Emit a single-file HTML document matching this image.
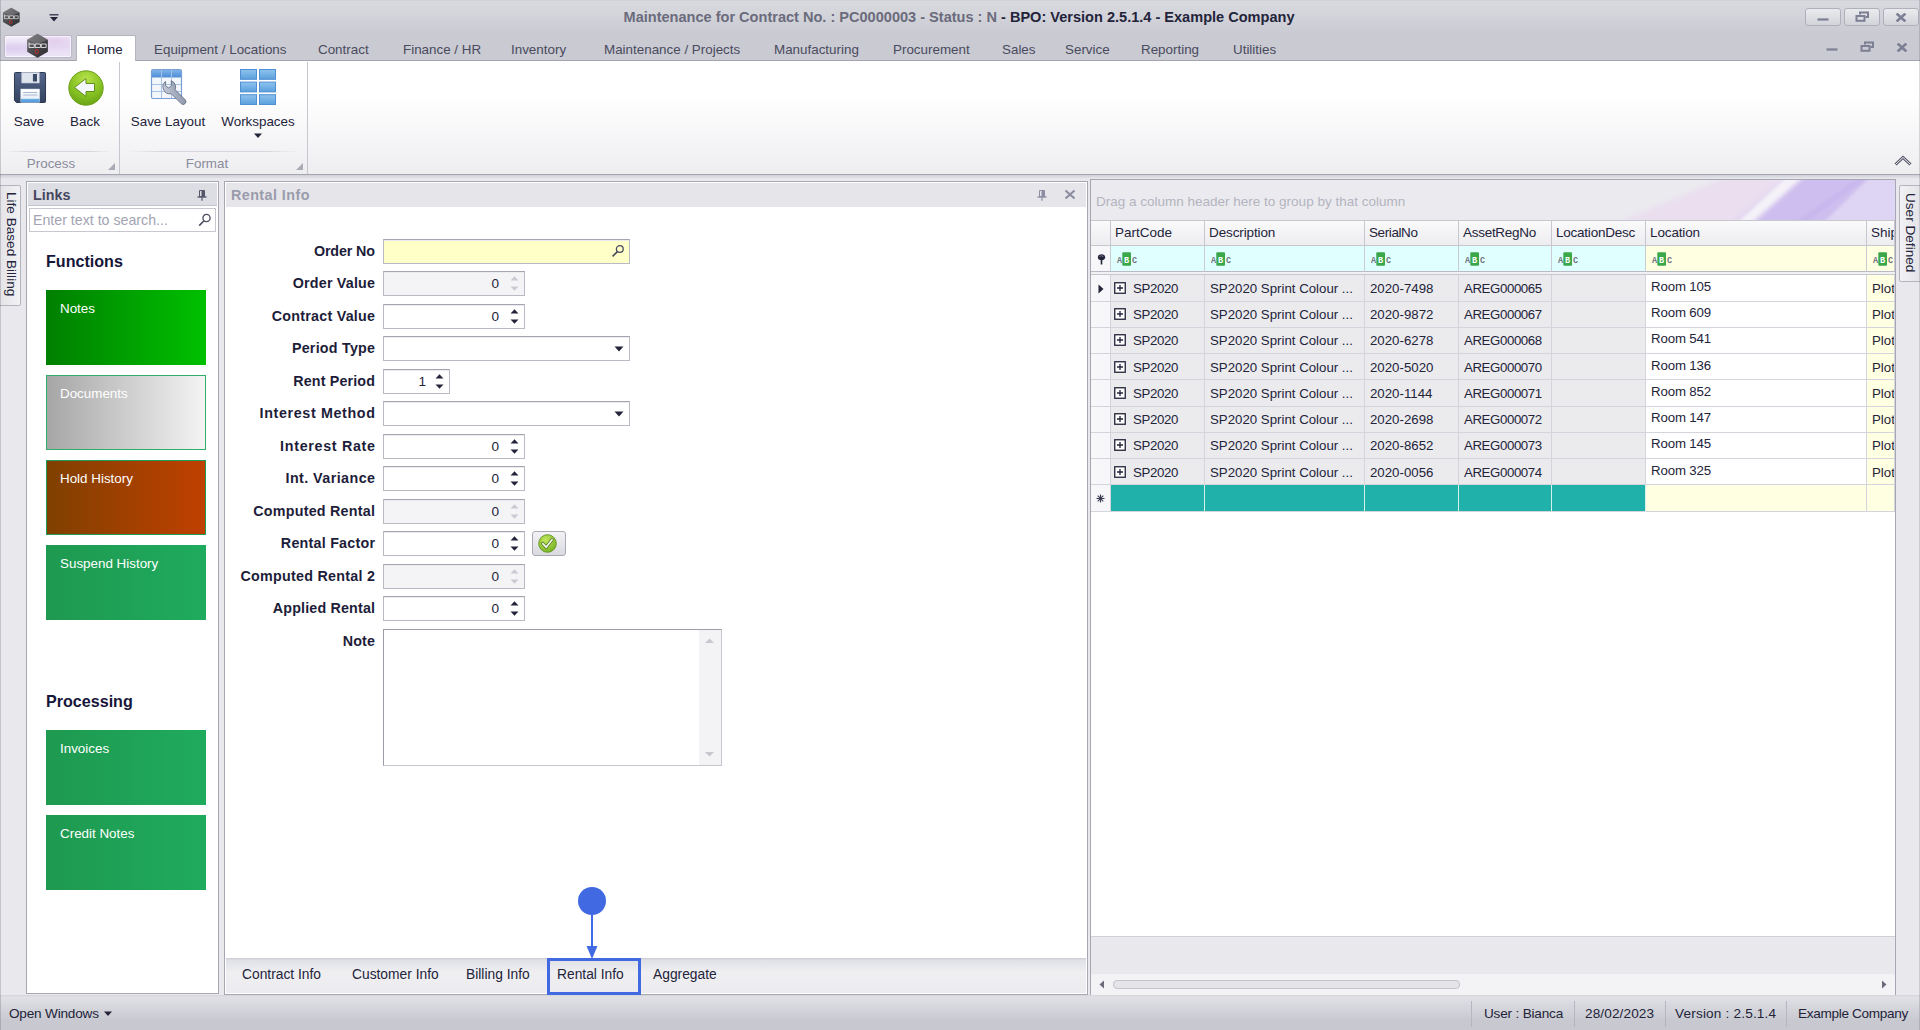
<!DOCTYPE html>
<html lang="en">
<head>
<meta charset="utf-8">
<title>Maintenance for Contract No. : PC0000003</title>
<style>
*{box-sizing:border-box;margin:0;padding:0}
html,body{width:1920px;height:1030px;overflow:hidden}
body{position:relative;background:#e9e9ed;font-family:"Liberation Sans","DejaVu Sans",sans-serif;font-size:13px;color:#23233a}
.abs{position:absolute}
/* title bar */
#titlebar{left:0;top:0;width:1920px;height:35px;background:linear-gradient(#c9cad0 0,#d8d9de 1px,#d4d5db 40%,#c9cad2 95%)}
#title{left:0;top:9px;width:1918px;text-align:center;font-weight:bold;font-size:14.55px;color:#6a6b7c;white-space:nowrap}
#title b{color:#23233a}
#tabstrip{left:0;top:35px;width:1920px;height:26px;background:#c9cad2;border-bottom:1px solid #a3a4ae}
.mtab{top:41.5px;font-size:13.4px;color:#4a4b5e;white-space:nowrap}
#hometab{left:76px;top:35px;width:60px;height:27px;background:#fff;border:1px solid #b4b5bf;border-bottom:none;border-radius:2px 2px 0 0}
#appbtn{left:4px;top:35px;width:68px;height:23px;border:1px solid #bdb8cc;border-radius:2px;box-shadow:inset 0 0 0 1px rgba(255,255,255,.6);background:radial-gradient(ellipse at 75% 25%,#e3cdee 0,rgba(227,205,238,0) 45%),radial-gradient(ellipse at 15% 60%,#dccdf0 0,rgba(220,205,240,0) 40%),linear-gradient(#f4eef9,#e6dcf3 50%,#ece4f6)}
/* ribbon */
#ribbon{left:0;top:61px;width:1920px;height:114px;background:linear-gradient(#ffffff 30%,#eeeef1);border-bottom:1px solid #a5a6b0}
.rsep{top:62px;width:1px;height:112px;background:#c6c7cf}
.rbtn{top:114px;font-size:13.4px;color:#23233a;text-align:center;white-space:nowrap}
.rgrp{top:156px;font-size:13.4px;color:#8a8b9c;text-align:center}
/* status bar */
#status{left:0;top:995px;width:1920px;height:35px;background:linear-gradient(#d4d5db 0,#e0e0e5 2px,#d2d3d9 45%,#c8c9d0 75%,#c8c9d0)}
.st{top:1006px;font-size:13.6px;color:#23233a;white-space:nowrap}
.ssep{top:1001px;width:1px;height:26px;background:#b5b6c0}
/* panels */
.panel{background:#fff;border:1px solid #a6a7b2}

/* side tabs */
.vtab{background:linear-gradient(90deg,#e4e4e8,#f2f2f5);border:1px solid #b3b4be;font-size:13.6px;color:#23233a;white-space:nowrap}
.vtext{transform-origin:0 0;transform:rotate(90deg);white-space:nowrap;font-size:13.6px;color:#23233a}
/* links */
#links{left:26px;top:181px;width:193px;height:813px}
#linkshdr{left:28px;top:183px;width:189px;height:23px;background:#dddee3;border-bottom:1px solid #c2c3cb}
.ptitle{font-weight:bold;font-size:14.3px;white-space:nowrap}
#lsearch{left:29px;top:208px;width:187px;height:24px;background:#fff;border:1px solid #c6c7cf}
.hd{font-weight:bold;font-size:16.1px;color:#16163a;white-space:nowrap}
.tile{left:46px;width:160px;height:75px;color:#fff;font-size:13.4px;padding:11px 0 0 14px;white-space:nowrap}
.tg{background:linear-gradient(90deg,#1e9950,#1fab5e)}

/* rental */
#rental{left:224px;top:181px;width:864px;height:814px}
#rentalhdr{left:226px;top:183px;width:860px;height:24px;background:#e6e6ea}
.lbl{left:226px;width:149px;text-align:right;font-weight:bold;font-size:14.3px;color:#1d1d3a;white-space:nowrap;letter-spacing:0}
.inp{left:383px;height:25px;background:#fff;border:1px solid #b9bac4;border-top-color:#a4a5b0;box-shadow:inset 0 1px 0 #ececf0}
.inp.dis{background:#f4f4f7}
.num{font-size:13.6px;color:#23233a;text-align:right}
#btabs{left:226px;top:958px;width:860px;height:35px;background:linear-gradient(#c9cad2 0,#dfe0e5 2px,#efeff2 40%,#ececf0)}
.bt{top:967px;font-size:13.8px;color:#23233a;white-space:nowrap}

/* grid */
#grid{left:1090px;top:179px;width:806px;height:817px;background:#fff}
#gpanel{left:1091px;top:180px;width:804px;height:41px;background:#ebebef;overflow:hidden;border-bottom:1px solid #c6c7cf}
.gh{top:221px;height:25px;background:linear-gradient(#fafafb,#ededf0);border-right:1px solid #c6c7cf;border-bottom:1px solid #c6c7cf;font-size:13.5px;padding:4px 0 0 4px;white-space:nowrap;overflow:hidden;color:#23233a}
.gf{top:246px;height:26px;background:#e0ffff;border-right:1px solid #c9cad2;border-bottom:1px solid #b9bac4}
.gc{height:26.25px;border-right:1px solid #d3d4dc;border-bottom:1px solid #d3d4dc;font-size:13.25px;padding:5.5px 0 0 5px;white-space:nowrap;overflow:hidden;color:#23233a;background:#ebebee}
.gc.w{background:#fff;padding-top:3.5px}
.gc.y{background:#ffffe1}
.gc.t{background:#20b2aa}
.gc.i{background:#f7f7f9}
</style>
</head>
<body>
<div id="titlebar" class="abs"></div>
<div id="title" class="abs">Maintenance for Contract No. : PC0000003 - Status : N <b>- BPO: Version 2.5.1.4 - Example Company</b></div>
<div id="tabstrip" class="abs"></div>
<div id="appbtn" class="abs"></div>
<div id="hometab" class="abs"></div>
<div class="abs mtab" style="left:87px;color:#23233a">Home</div>
<div class="abs mtab" style="left:154px">Equipment / Locations</div>
<div class="abs mtab" style="left:318px">Contract</div>
<div class="abs mtab" style="left:403px">Finance / HR</div>
<div class="abs mtab" style="left:511px">Inventory</div>
<div class="abs mtab" style="left:604px">Maintenance / Projects</div>
<div class="abs mtab" style="left:774px">Manufacturing</div>
<div class="abs mtab" style="left:893px">Procurement</div>
<div class="abs mtab" style="left:1002px">Sales</div>
<div class="abs mtab" style="left:1065px">Service</div>
<div class="abs mtab" style="left:1141px">Reporting</div>
<div class="abs mtab" style="left:1233px">Utilities</div>
<div id="ribbon" class="abs"></div>
<div class="abs" style="left:0;top:175px;width:1920px;height:4px;background:linear-gradient(#cfd0d7,#e9e9ed)"></div>
<div class="abs rsep" style="left:119px"></div>
<div class="abs rsep" style="left:307px"></div>
<div class="abs rbtn" style="left:4px;width:50px">Save</div>
<div class="abs rbtn" style="left:60px;width:50px">Back</div>
<div class="abs rbtn" style="left:123px;width:90px">Save Layout</div>
<div class="abs rbtn" style="left:213px;width:90px">Workspaces</div>
<div class="abs rgrp" style="left:0;width:102px">Process</div>
<div class="abs rgrp" style="left:120px;width:174px">Format</div>

<div class="abs vtab" style="left:-1px;top:185px;width:22px;height:121px;border-radius:0 2px 2px 0"></div>
<div class="abs vtext" style="left:19px;top:192px">Life Based Billing</div>
<div id="links" class="abs panel"></div>
<div id="linkshdr" class="abs"></div>
<div class="abs ptitle" style="left:33px;top:187px;color:#45465e">Links</div>
<svg class="abs" style="left:197px;top:190px" width="10" height="11" viewBox="0 0 10 11"><path d="M2.5 0.5h5v6h-5z" fill="none" stroke="#55566a" stroke-width="1"/><rect x="4.5" y="0.5" width="3.2" height="6" fill="#55566a"/><path d="M0.5 7h9" stroke="#55566a" stroke-width="1.4"/><path d="M5 7.5v3.3" stroke="#55566a" stroke-width="1.2"/></svg>
<div id="lsearch" class="abs"></div>
<div class="abs" style="left:33px;top:212px;font-size:14.2px;color:#a3a4b2;white-space:nowrap">Enter text to search...</div>
<svg class="abs" style="left:197px;top:212px" width="16" height="16" viewBox="0 0 16 16"><circle cx="9.5" cy="6" r="3.6" fill="none" stroke="#4a4b5e" stroke-width="1.3"/><path d="M7 8.8L2.2 13.6" stroke="#4a4b5e" stroke-width="1.6"/></svg>
<div class="abs hd" style="left:46px;top:252px">Functions</div>
<div class="abs tile" style="top:290px;background:linear-gradient(90deg,#007f00,#00c000)">Notes</div>
<div class="abs tile" style="top:375px;background:linear-gradient(90deg,#a6a6a6,#f4f4f4);border:1px solid #2fae6b;padding:10px 0 0 13px">Documents</div>
<div class="abs tile" style="top:460px;background:linear-gradient(90deg,#7f4000,#c04000);border:1px solid #1f9d58;padding:10px 0 0 13px">Hold History</div>
<div class="abs tile tg" style="top:545px">Suspend History</div>
<div class="abs hd" style="left:46px;top:692px">Processing</div>
<div class="abs tile tg" style="top:730px">Invoices</div>
<div class="abs tile tg" style="top:815px">Credit Notes</div>
<div id="rental" class="abs panel"></div>
<div id="rentalhdr" class="abs"></div>
<div class="abs ptitle" style="left:231px;top:187px;color:#9a9bab;letter-spacing:0.45px">Rental Info</div>
<svg class="abs" style="left:1037px;top:190px" width="10" height="11" viewBox="0 0 10 11"><path d="M2.5 0.5h5v6h-5z" fill="none" stroke="#8b8ea2" stroke-width="1"/><rect x="4.5" y="0.5" width="3.2" height="6" fill="#8b8ea2"/><path d="M0.5 7h9" stroke="#8b8ea2" stroke-width="1.4"/><path d="M5 7.5v3.3" stroke="#8b8ea2" stroke-width="1.2"/></svg>
<svg class="abs" style="left:1064px;top:189px" width="12" height="11" viewBox="0 0 12 11"><path d="M1.5 1.5L10.5 9.5M10.5 1.5L1.5 9.5" stroke="#8b8ea2" stroke-width="2.2" fill="none"/></svg>
<div class="abs lbl" style="top:243px;letter-spacing:-0.13px;left:225.87px">Order No</div>
<div class="abs inp" style="top:239px;width:247px;background:#ffffc8"></div>
<svg class="abs" style="left:610px;top:243px" width="16" height="16" viewBox="0 0 16 16"><circle cx="9.8" cy="6" r="3.4" fill="none" stroke="#4a4b5e" stroke-width="1.3"/><path d="M7.4 8.6L2.6 13.4" stroke="#4a4b5e" stroke-width="1.6"/></svg>
<div class="abs lbl" style="top:275px;letter-spacing:0.2px;left:226.20px">Order Value</div>
<div class="abs inp dis" style="top:271px;width:142px"></div>
<div class="abs num" style="left:383px;width:116px;top:276px">0</div>
<svg class="abs" style="left:510px;top:275px" width="9" height="17" viewBox="0 0 9 17"><path d="M0.5 5.5L4.5 1.2L8.5 5.5Z" fill="#c9cad2"/><path d="M0.5 11.5L4.5 15.8L8.5 11.5Z" fill="#c9cad2"/></svg>
<div class="abs lbl" style="top:308px;letter-spacing:0.24px;left:226.24px">Contract Value</div>
<div class="abs inp" style="top:304px;width:142px"></div>
<div class="abs num" style="left:383px;width:116px;top:309px">0</div>
<svg class="abs" style="left:510px;top:308px" width="9" height="17" viewBox="0 0 9 17"><path d="M0.5 5.5L4.5 1.2L8.5 5.5Z" fill="#23233a"/><path d="M0.5 11.5L4.5 15.8L8.5 11.5Z" fill="#23233a"/></svg>
<div class="abs lbl" style="top:340px;letter-spacing:0.23px;left:226.23px">Period Type</div>
<div class="abs inp" style="top:336px;width:247px"></div>
<svg class="abs" style="left:614px;top:346px" width="10" height="6" viewBox="0 0 10 6"><path d="M0.5 0.5h9L5 5.5Z" fill="#23233a"/></svg>
<div class="abs lbl" style="top:373px;letter-spacing:0.15px;left:226.15px">Rent Period</div>
<div class="abs inp" style="top:369px;width:67px"></div>
<div class="abs num" style="left:383px;width:43px;top:374px">1</div>
<svg class="abs" style="left:435px;top:373px" width="9" height="17" viewBox="0 0 9 17"><path d="M0.5 5.5L4.5 1.2L8.5 5.5Z" fill="#23233a"/><path d="M0.5 11.5L4.5 15.8L8.5 11.5Z" fill="#23233a"/></svg>
<div class="abs lbl" style="top:405px;letter-spacing:0.64px;left:226.64px">Interest Method</div>
<div class="abs inp" style="top:401px;width:247px"></div>
<svg class="abs" style="left:614px;top:411px" width="10" height="6" viewBox="0 0 10 6"><path d="M0.5 0.5h9L5 5.5Z" fill="#23233a"/></svg>
<div class="abs lbl" style="top:438px;letter-spacing:0.69px;left:226.69px">Interest Rate</div>
<div class="abs inp" style="top:434px;width:142px"></div>
<div class="abs num" style="left:383px;width:116px;top:439px">0</div>
<svg class="abs" style="left:510px;top:438px" width="9" height="17" viewBox="0 0 9 17"><path d="M0.5 5.5L4.5 1.2L8.5 5.5Z" fill="#23233a"/><path d="M0.5 11.5L4.5 15.8L8.5 11.5Z" fill="#23233a"/></svg>
<div class="abs lbl" style="top:470px;letter-spacing:0.44px;left:226.44px">Int. Variance</div>
<div class="abs inp" style="top:466px;width:142px"></div>
<div class="abs num" style="left:383px;width:116px;top:471px">0</div>
<svg class="abs" style="left:510px;top:470px" width="9" height="17" viewBox="0 0 9 17"><path d="M0.5 5.5L4.5 1.2L8.5 5.5Z" fill="#23233a"/><path d="M0.5 11.5L4.5 15.8L8.5 11.5Z" fill="#23233a"/></svg>
<div class="abs lbl" style="top:503px;letter-spacing:0.25px;left:226.25px">Computed Rental</div>
<div class="abs inp dis" style="top:499px;width:142px"></div>
<div class="abs num" style="left:383px;width:116px;top:504px">0</div>
<svg class="abs" style="left:510px;top:503px" width="9" height="17" viewBox="0 0 9 17"><path d="M0.5 5.5L4.5 1.2L8.5 5.5Z" fill="#c9cad2"/><path d="M0.5 11.5L4.5 15.8L8.5 11.5Z" fill="#c9cad2"/></svg>
<div class="abs lbl" style="top:535px;letter-spacing:0.23px;left:226.23px">Rental Factor</div>
<div class="abs inp" style="top:531px;width:142px"></div>
<div class="abs num" style="left:383px;width:116px;top:536px">0</div>
<svg class="abs" style="left:510px;top:535px" width="9" height="17" viewBox="0 0 9 17"><path d="M0.5 5.5L4.5 1.2L8.5 5.5Z" fill="#23233a"/><path d="M0.5 11.5L4.5 15.8L8.5 11.5Z" fill="#23233a"/></svg>
<div class="abs lbl" style="top:568px;letter-spacing:0.27px;left:226.27px">Computed Rental 2</div>
<div class="abs inp dis" style="top:564px;width:142px"></div>
<div class="abs num" style="left:383px;width:116px;top:569px">0</div>
<svg class="abs" style="left:510px;top:568px" width="9" height="17" viewBox="0 0 9 17"><path d="M0.5 5.5L4.5 1.2L8.5 5.5Z" fill="#c9cad2"/><path d="M0.5 11.5L4.5 15.8L8.5 11.5Z" fill="#c9cad2"/></svg>
<div class="abs lbl" style="top:600px;letter-spacing:0.16px;left:226.16px">Applied Rental</div>
<div class="abs inp" style="top:596px;width:142px"></div>
<div class="abs num" style="left:383px;width:116px;top:601px">0</div>
<svg class="abs" style="left:510px;top:600px" width="9" height="17" viewBox="0 0 9 17"><path d="M0.5 5.5L4.5 1.2L8.5 5.5Z" fill="#23233a"/><path d="M0.5 11.5L4.5 15.8L8.5 11.5Z" fill="#23233a"/></svg>
<div class="abs" style="left:532px;top:531px;width:34px;height:25px;border:1px solid #a9aab5;border-radius:3px;background:linear-gradient(#f3f3f6,#d9dae0)"></div>
<svg class="abs" style="left:537px;top:533px" width="22" height="22" viewBox="0 0 22 22"><defs><radialGradient id="gck" cx="0.4" cy="0.3" r="0.8"><stop offset="0" stop-color="#c3e85c"/><stop offset="1" stop-color="#6fae1e"/></radialGradient></defs><circle cx="10.5" cy="10.5" r="8.8" fill="url(#gck)" stroke="#6c9a2a" stroke-width="1"/><path d="M5.8 10.6L9.2 14.2L15 6.8" fill="none" stroke="#5b7f2a" stroke-width="3.4" stroke-linecap="round" stroke-linejoin="round"/><path d="M5.8 10.6L9.2 14.2L15 6.8" fill="none" stroke="#eef3e4" stroke-width="1.8" stroke-linecap="round" stroke-linejoin="round"/></svg>
<div class="abs lbl" style="top:633px;letter-spacing:0.15px;left:226.15px">Note</div>
<div class="abs" style="left:383px;top:629px;width:339px;height:137px;background:#fff;border:1px solid #c6c7cf;border-top:1px solid #9c9da8;border-left:1px solid #9c9da8"></div>
<div class="abs" style="left:699px;top:630px;width:22px;height:135px;background:#f3f3f6"></div>
<svg class="abs" style="left:705px;top:638px" width="9" height="5" viewBox="0 0 9 5"><path d="M0 5L4.5 0.5L9 5Z" fill="#c6c7cf"/></svg>
<svg class="abs" style="left:705px;top:752px" width="9" height="5" viewBox="0 0 9 5"><path d="M0 0L4.5 4.5L9 0Z" fill="#c6c7cf"/></svg>
<div id="btabs" class="abs"></div>
<div class="abs bt" style="left:242px">Contract Info</div>
<div class="abs bt" style="left:352px">Customer Info</div>
<div class="abs bt" style="left:466px">Billing Info</div>
<div class="abs bt" style="left:557px">Rental Info</div>
<div class="abs bt" style="left:653px">Aggregate</div>
<div class="abs" style="left:547px;top:958px;width:94px;height:37px;border:3px solid #4169e1"></div>
<svg class="abs" style="left:576px;top:885px" width="32" height="76" viewBox="0 0 32 76"><circle cx="16" cy="16" r="14" fill="#4169e1"/><path d="M16 29V62" stroke="#4169e1" stroke-width="2"/><path d="M10.5 61h11L16 74Z" fill="#4169e1"/></svg>
<div id="grid" class="abs panel"></div>
<div id="gpanel" class="abs"><svg width="804" height="41" viewBox="0 0 804 41" style="position:absolute;left:0;top:0"><defs><filter id="bl" x="-10%" y="-50%" width="120%" height="200%"><feGaussianBlur stdDeviation="3"/></filter><filter id="bl2" x="-10%" y="-50%" width="120%" height="200%"><feGaussianBlur stdDeviation="1.5"/></filter></defs><g filter="url(#bl)"><path d="M520 45L640 -5H720L650 45Z" fill="#ead9ef" opacity="0.75"/><path d="M640 45L700 -5H830V45Z" fill="#ddd2f3" opacity="0.9"/></g><g filter="url(#bl2)"><path d="M662 45L716 -4H780L730 45Z" fill="#c9b9ee" opacity="0.8"/><path d="M644 45L697 -4H712L657 45Z" fill="#f4f1f8"/><path d="M700 45L770 -4H778L712 45Z" fill="#b9a5e8" opacity="0.3"/></g></svg></div>
<div class="abs" style="left:1096px;top:194px;font-size:13.5px;color:#b3b4c0;white-space:nowrap">Drag a column header here to group by that column</div>
<div class="abs gh" style="left:1091px;width:20px"></div>
<div class="abs gf" style="left:1091px;width:20px;background:#f7f7f9"></div>
<div class="abs gh" style="left:1111px;width:94px">PartCode</div>
<div class="abs gf" style="left:1111px;width:94px"></div>
<svg class="abs" style="left:1116px;top:252px" width="21" height="14" viewBox="0 0 21 14"><rect x="6.3" y="0.3" width="8.7" height="13.4" rx="1" fill="#3aa84a"/><text x="1" y="10.5" font-family="Liberation Mono,monospace" font-size="8.5" font-weight="bold" fill="#73737f">A</text><text x="8" y="10.5" font-family="Liberation Mono,monospace" font-size="8.5" font-weight="bold" fill="#ffffff">B</text><text x="16" y="10.5" font-family="Liberation Mono,monospace" font-size="8.5" font-weight="bold" fill="#73737f">C</text></svg>
<div class="abs gh" style="left:1205px;width:160px;letter-spacing:-0.12px">Description</div>
<div class="abs gf" style="left:1205px;width:160px"></div>
<svg class="abs" style="left:1210px;top:252px" width="21" height="14" viewBox="0 0 21 14"><rect x="6.3" y="0.3" width="8.7" height="13.4" rx="1" fill="#3aa84a"/><text x="1" y="10.5" font-family="Liberation Mono,monospace" font-size="8.5" font-weight="bold" fill="#73737f">A</text><text x="8" y="10.5" font-family="Liberation Mono,monospace" font-size="8.5" font-weight="bold" fill="#ffffff">B</text><text x="16" y="10.5" font-family="Liberation Mono,monospace" font-size="8.5" font-weight="bold" fill="#73737f">C</text></svg>
<div class="abs gh" style="left:1365px;width:94px;letter-spacing:-0.4px">SerialNo</div>
<div class="abs gf" style="left:1365px;width:94px"></div>
<svg class="abs" style="left:1370px;top:252px" width="21" height="14" viewBox="0 0 21 14"><rect x="6.3" y="0.3" width="8.7" height="13.4" rx="1" fill="#3aa84a"/><text x="1" y="10.5" font-family="Liberation Mono,monospace" font-size="8.5" font-weight="bold" fill="#73737f">A</text><text x="8" y="10.5" font-family="Liberation Mono,monospace" font-size="8.5" font-weight="bold" fill="#ffffff">B</text><text x="16" y="10.5" font-family="Liberation Mono,monospace" font-size="8.5" font-weight="bold" fill="#73737f">C</text></svg>
<div class="abs gh" style="left:1459px;width:93px;letter-spacing:-0.28px">AssetRegNo</div>
<div class="abs gf" style="left:1459px;width:93px"></div>
<svg class="abs" style="left:1464px;top:252px" width="21" height="14" viewBox="0 0 21 14"><rect x="6.3" y="0.3" width="8.7" height="13.4" rx="1" fill="#3aa84a"/><text x="1" y="10.5" font-family="Liberation Mono,monospace" font-size="8.5" font-weight="bold" fill="#73737f">A</text><text x="8" y="10.5" font-family="Liberation Mono,monospace" font-size="8.5" font-weight="bold" fill="#ffffff">B</text><text x="16" y="10.5" font-family="Liberation Mono,monospace" font-size="8.5" font-weight="bold" fill="#73737f">C</text></svg>
<div class="abs gh" style="left:1552px;width:94px;letter-spacing:-0.23px">LocationDesc</div>
<div class="abs gf" style="left:1552px;width:94px"></div>
<svg class="abs" style="left:1557px;top:252px" width="21" height="14" viewBox="0 0 21 14"><rect x="6.3" y="0.3" width="8.7" height="13.4" rx="1" fill="#3aa84a"/><text x="1" y="10.5" font-family="Liberation Mono,monospace" font-size="8.5" font-weight="bold" fill="#73737f">A</text><text x="8" y="10.5" font-family="Liberation Mono,monospace" font-size="8.5" font-weight="bold" fill="#ffffff">B</text><text x="16" y="10.5" font-family="Liberation Mono,monospace" font-size="8.5" font-weight="bold" fill="#73737f">C</text></svg>
<div class="abs gh" style="left:1646px;width:221px;letter-spacing:-0.13px">Location</div>
<div class="abs gf" style="left:1646px;width:221px;background:#ffffe1"></div>
<svg class="abs" style="left:1651px;top:252px" width="21" height="14" viewBox="0 0 21 14"><rect x="6.3" y="0.3" width="8.7" height="13.4" rx="1" fill="#3aa84a"/><text x="1" y="10.5" font-family="Liberation Mono,monospace" font-size="8.5" font-weight="bold" fill="#73737f">A</text><text x="8" y="10.5" font-family="Liberation Mono,monospace" font-size="8.5" font-weight="bold" fill="#ffffff">B</text><text x="16" y="10.5" font-family="Liberation Mono,monospace" font-size="8.5" font-weight="bold" fill="#73737f">C</text></svg>
<div class="abs gh" style="left:1867px;width:28px">Ship</div>
<div class="abs gf" style="left:1867px;width:28px;background:#ffffe1"></div>
<svg class="abs" style="left:1872px;top:252px" width="21" height="14" viewBox="0 0 21 14"><rect x="6.3" y="0.3" width="8.7" height="13.4" rx="1" fill="#3aa84a"/><text x="1" y="10.5" font-family="Liberation Mono,monospace" font-size="8.5" font-weight="bold" fill="#73737f">A</text><text x="8" y="10.5" font-family="Liberation Mono,monospace" font-size="8.5" font-weight="bold" fill="#ffffff">B</text><text x="16" y="10.5" font-family="Liberation Mono,monospace" font-size="8.5" font-weight="bold" fill="#73737f">C</text></svg>
<svg class="abs" style="left:1096.5px;top:254px" width="9" height="11" viewBox="0 0 9 11"><ellipse cx="4.5" cy="3.2" rx="3.6" ry="3" fill="#23233a"/><path d="M2.6 2.4q1.9-1.2 3.8 0" stroke="#8a8b98" stroke-width="0.8" fill="none"/><path d="M4.5 5v5.5" stroke="#23233a" stroke-width="1.6"/></svg>
<div class="abs" style="left:1091px;top:272px;width:804px;height:3px;background:#f1f1f4;border-bottom:1px solid #c6c7cf"></div>
<div class="abs gc i" style="left:1091px;top:275.25px;width:20px"></div>
<div class="abs gc" style="left:1111px;top:275.25px;width:94px;padding-left:22px;letter-spacing:-0.35px">SP2020</div>
<div class="abs gc" style="left:1205px;top:275.25px;width:160px">SP2020 Sprint Colour  ...</div>
<div class="abs gc" style="left:1365px;top:275.25px;width:94px">2020-7498</div>
<div class="abs gc" style="left:1459px;top:275.25px;width:93px;letter-spacing:-0.4px">AREG000065</div>
<div class="abs gc" style="left:1552px;top:275.25px;width:94px"></div>
<div class="abs gc w" style="left:1646px;top:275.25px;width:221px;letter-spacing:-0.14px">Room 105</div>
<div class="abs gc y" style="left:1867px;top:275.25px;width:28px">Plot</div>
<svg class="abs" style="left:1114px;top:281.75px" width="12" height="12" viewBox="0 0 12 12"><rect x="0.75" y="0.75" width="10.5" height="10.5" fill="#fff" stroke="#23233a" stroke-width="1.3"/><path d="M3 6h6M6 3v6" stroke="#23233a" stroke-width="1.3"/></svg>
<div class="abs gc i" style="left:1091px;top:301.5px;width:20px"></div>
<div class="abs gc" style="left:1111px;top:301.5px;width:94px;padding-left:22px;letter-spacing:-0.35px">SP2020</div>
<div class="abs gc" style="left:1205px;top:301.5px;width:160px">SP2020 Sprint Colour  ...</div>
<div class="abs gc" style="left:1365px;top:301.5px;width:94px">2020-9872</div>
<div class="abs gc" style="left:1459px;top:301.5px;width:93px;letter-spacing:-0.4px">AREG000067</div>
<div class="abs gc" style="left:1552px;top:301.5px;width:94px"></div>
<div class="abs gc w" style="left:1646px;top:301.5px;width:221px;letter-spacing:-0.14px">Room 609</div>
<div class="abs gc y" style="left:1867px;top:301.5px;width:28px">Plot</div>
<svg class="abs" style="left:1114px;top:308.0px" width="12" height="12" viewBox="0 0 12 12"><rect x="0.75" y="0.75" width="10.5" height="10.5" fill="#fff" stroke="#23233a" stroke-width="1.3"/><path d="M3 6h6M6 3v6" stroke="#23233a" stroke-width="1.3"/></svg>
<div class="abs gc i" style="left:1091px;top:327.75px;width:20px"></div>
<div class="abs gc" style="left:1111px;top:327.75px;width:94px;padding-left:22px;letter-spacing:-0.35px">SP2020</div>
<div class="abs gc" style="left:1205px;top:327.75px;width:160px">SP2020 Sprint Colour  ...</div>
<div class="abs gc" style="left:1365px;top:327.75px;width:94px">2020-6278</div>
<div class="abs gc" style="left:1459px;top:327.75px;width:93px;letter-spacing:-0.4px">AREG000068</div>
<div class="abs gc" style="left:1552px;top:327.75px;width:94px"></div>
<div class="abs gc w" style="left:1646px;top:327.75px;width:221px;letter-spacing:-0.14px">Room 541</div>
<div class="abs gc y" style="left:1867px;top:327.75px;width:28px">Plot</div>
<svg class="abs" style="left:1114px;top:334.25px" width="12" height="12" viewBox="0 0 12 12"><rect x="0.75" y="0.75" width="10.5" height="10.5" fill="#fff" stroke="#23233a" stroke-width="1.3"/><path d="M3 6h6M6 3v6" stroke="#23233a" stroke-width="1.3"/></svg>
<div class="abs gc i" style="left:1091px;top:354.0px;width:20px"></div>
<div class="abs gc" style="left:1111px;top:354.0px;width:94px;padding-left:22px;letter-spacing:-0.35px">SP2020</div>
<div class="abs gc" style="left:1205px;top:354.0px;width:160px">SP2020 Sprint Colour  ...</div>
<div class="abs gc" style="left:1365px;top:354.0px;width:94px">2020-5020</div>
<div class="abs gc" style="left:1459px;top:354.0px;width:93px;letter-spacing:-0.4px">AREG000070</div>
<div class="abs gc" style="left:1552px;top:354.0px;width:94px"></div>
<div class="abs gc w" style="left:1646px;top:354.0px;width:221px;letter-spacing:-0.14px">Room 136</div>
<div class="abs gc y" style="left:1867px;top:354.0px;width:28px">Plot</div>
<svg class="abs" style="left:1114px;top:360.5px" width="12" height="12" viewBox="0 0 12 12"><rect x="0.75" y="0.75" width="10.5" height="10.5" fill="#fff" stroke="#23233a" stroke-width="1.3"/><path d="M3 6h6M6 3v6" stroke="#23233a" stroke-width="1.3"/></svg>
<div class="abs gc i" style="left:1091px;top:380.25px;width:20px"></div>
<div class="abs gc" style="left:1111px;top:380.25px;width:94px;padding-left:22px;letter-spacing:-0.35px">SP2020</div>
<div class="abs gc" style="left:1205px;top:380.25px;width:160px">SP2020 Sprint Colour  ...</div>
<div class="abs gc" style="left:1365px;top:380.25px;width:94px">2020-1144</div>
<div class="abs gc" style="left:1459px;top:380.25px;width:93px;letter-spacing:-0.4px">AREG000071</div>
<div class="abs gc" style="left:1552px;top:380.25px;width:94px"></div>
<div class="abs gc w" style="left:1646px;top:380.25px;width:221px;letter-spacing:-0.14px">Room 852</div>
<div class="abs gc y" style="left:1867px;top:380.25px;width:28px">Plot</div>
<svg class="abs" style="left:1114px;top:386.75px" width="12" height="12" viewBox="0 0 12 12"><rect x="0.75" y="0.75" width="10.5" height="10.5" fill="#fff" stroke="#23233a" stroke-width="1.3"/><path d="M3 6h6M6 3v6" stroke="#23233a" stroke-width="1.3"/></svg>
<div class="abs gc i" style="left:1091px;top:406.5px;width:20px"></div>
<div class="abs gc" style="left:1111px;top:406.5px;width:94px;padding-left:22px;letter-spacing:-0.35px">SP2020</div>
<div class="abs gc" style="left:1205px;top:406.5px;width:160px">SP2020 Sprint Colour  ...</div>
<div class="abs gc" style="left:1365px;top:406.5px;width:94px">2020-2698</div>
<div class="abs gc" style="left:1459px;top:406.5px;width:93px;letter-spacing:-0.4px">AREG000072</div>
<div class="abs gc" style="left:1552px;top:406.5px;width:94px"></div>
<div class="abs gc w" style="left:1646px;top:406.5px;width:221px;letter-spacing:-0.14px">Room 147</div>
<div class="abs gc y" style="left:1867px;top:406.5px;width:28px">Plot</div>
<svg class="abs" style="left:1114px;top:413.0px" width="12" height="12" viewBox="0 0 12 12"><rect x="0.75" y="0.75" width="10.5" height="10.5" fill="#fff" stroke="#23233a" stroke-width="1.3"/><path d="M3 6h6M6 3v6" stroke="#23233a" stroke-width="1.3"/></svg>
<div class="abs gc i" style="left:1091px;top:432.75px;width:20px"></div>
<div class="abs gc" style="left:1111px;top:432.75px;width:94px;padding-left:22px;letter-spacing:-0.35px">SP2020</div>
<div class="abs gc" style="left:1205px;top:432.75px;width:160px">SP2020 Sprint Colour  ...</div>
<div class="abs gc" style="left:1365px;top:432.75px;width:94px">2020-8652</div>
<div class="abs gc" style="left:1459px;top:432.75px;width:93px;letter-spacing:-0.4px">AREG000073</div>
<div class="abs gc" style="left:1552px;top:432.75px;width:94px"></div>
<div class="abs gc w" style="left:1646px;top:432.75px;width:221px;letter-spacing:-0.14px">Room 145</div>
<div class="abs gc y" style="left:1867px;top:432.75px;width:28px">Plot</div>
<svg class="abs" style="left:1114px;top:439.25px" width="12" height="12" viewBox="0 0 12 12"><rect x="0.75" y="0.75" width="10.5" height="10.5" fill="#fff" stroke="#23233a" stroke-width="1.3"/><path d="M3 6h6M6 3v6" stroke="#23233a" stroke-width="1.3"/></svg>
<div class="abs gc i" style="left:1091px;top:459.0px;width:20px"></div>
<div class="abs gc" style="left:1111px;top:459.0px;width:94px;padding-left:22px;letter-spacing:-0.35px">SP2020</div>
<div class="abs gc" style="left:1205px;top:459.0px;width:160px">SP2020 Sprint Colour  ...</div>
<div class="abs gc" style="left:1365px;top:459.0px;width:94px">2020-0056</div>
<div class="abs gc" style="left:1459px;top:459.0px;width:93px;letter-spacing:-0.4px">AREG000074</div>
<div class="abs gc" style="left:1552px;top:459.0px;width:94px"></div>
<div class="abs gc w" style="left:1646px;top:459.0px;width:221px;letter-spacing:-0.14px">Room 325</div>
<div class="abs gc y" style="left:1867px;top:459.0px;width:28px">Plot</div>
<svg class="abs" style="left:1114px;top:465.5px" width="12" height="12" viewBox="0 0 12 12"><rect x="0.75" y="0.75" width="10.5" height="10.5" fill="#fff" stroke="#23233a" stroke-width="1.3"/><path d="M3 6h6M6 3v6" stroke="#23233a" stroke-width="1.3"/></svg>
<svg class="abs" style="left:1098px;top:284px" width="6" height="10" viewBox="0 0 6 10"><path d="M0.5 0.5L5.5 5L0.5 9.5Z" fill="#23233a"/></svg>
<div class="abs gc i" style="left:1091px;top:485.25px;width:20px"></div>
<div class="abs gc t" style="left:1111px;top:485.25px;width:94px;border-right-color:#d7f0ee"></div>
<div class="abs gc t" style="left:1205px;top:485.25px;width:160px;border-right-color:#d7f0ee"></div>
<div class="abs gc t" style="left:1365px;top:485.25px;width:94px;border-right-color:#d7f0ee"></div>
<div class="abs gc t" style="left:1459px;top:485.25px;width:93px;border-right-color:#d7f0ee"></div>
<div class="abs gc t" style="left:1552px;top:485.25px;width:94px;border-right-color:#d7f0ee"></div>
<div class="abs gc y" style="left:1646px;top:485.25px;width:221px"></div>
<div class="abs gc y" style="left:1867px;top:485.25px;width:28px"></div>
<svg class="abs" style="left:1096px;top:494px" width="9" height="9" viewBox="0 0 9 9"><path d="M4.5 0.5v8M0.5 4.5h8M1.7 1.7l5.6 5.6M7.3 1.7l-5.6 5.6" stroke="#3a3b52" stroke-width="1.1"/></svg>
<div class="abs" style="left:1091px;top:936px;width:804px;height:38px;background:#e9e9ed;border-top:1px solid #d0d1d8"></div>
<div class="abs" style="left:1091px;top:974px;width:804px;height:21px;background:#f3f3f6"></div>
<div class="abs" style="left:1113px;top:980px;width:347px;height:9px;border:1px solid #c3c4cc;border-radius:4px;background:#e4e4e9"></div>
<svg class="abs" style="left:1099px;top:980px" width="5" height="9" viewBox="0 0 5 9"><path d="M5 0.5L0.5 4.5L5 8.5Z" fill="#6a6b7c"/></svg>
<svg class="abs" style="left:1882px;top:980px" width="5" height="9" viewBox="0 0 5 9"><path d="M0 0.5L4.5 4.5L0 8.5Z" fill="#6a6b7c"/></svg>
<div class="abs vtab" style="left:1899px;top:185px;width:22px;height:97px;border-radius:2px 0 0 2px;background:linear-gradient(90deg,#f2f2f5,#e4e4e8)"></div>
<div class="abs vtext" style="left:1918px;top:193px">User Defined</div>

<svg class="abs" style="left:2px;top:7px" width="18.5" height="20.5" viewBox="0 0 24 26" preserveAspectRatio="none"><defs><linearGradient id="hx1" x1="0" y1="0" x2="1" y2="1"><stop offset="0" stop-color="#77777b"/><stop offset="0.45" stop-color="#4c4c50"/><stop offset="1" stop-color="#333337"/></linearGradient></defs><path d="M12 0.8L22.8 7V19L12 25.2L1.2 19V7Z" fill="url(#hx1)"/><path d="M12 0.8L22.8 7L12 11.5L1.2 7Z" fill="#8d8d91" opacity="0.45"/><path d="M12 11.5V25.2L22.8 19V7Z" fill="#2a2a2e" opacity="0.25"/><path d="M3.2 11.2h5.4v3.6H3.2zM9.6 11.2h5.4v3.6H9.6zM16 11.2h5v3.6h-5z" fill="none" stroke="#ececee" stroke-width="1" opacity="0.9"/><path d="M3.2 9.5v2" stroke="#ececee" stroke-width="1" opacity="0.9"/><ellipse cx="11.3" cy="19" rx="1.7" ry="2.2" fill="none" stroke="#c4302b" stroke-width="1"/></svg>
<svg class="abs" style="left:25.5px;top:32.5px" width="23" height="25.5" viewBox="0 0 24 26" preserveAspectRatio="none"><defs><linearGradient id="hx2" x1="0" y1="0" x2="1" y2="1"><stop offset="0" stop-color="#77777b"/><stop offset="0.45" stop-color="#4c4c50"/><stop offset="1" stop-color="#333337"/></linearGradient></defs><path d="M12 0.8L22.8 7V19L12 25.2L1.2 19V7Z" fill="url(#hx2)"/><path d="M12 0.8L22.8 7L12 11.5L1.2 7Z" fill="#8d8d91" opacity="0.45"/><path d="M12 11.5V25.2L22.8 19V7Z" fill="#2a2a2e" opacity="0.25"/><path d="M3.2 11.2h5.4v3.6H3.2zM9.6 11.2h5.4v3.6H9.6zM16 11.2h5v3.6h-5z" fill="none" stroke="#ececee" stroke-width="1" opacity="0.9"/><path d="M3.2 9.5v2" stroke="#ececee" stroke-width="1" opacity="0.9"/><ellipse cx="11.3" cy="19" rx="1.7" ry="2.2" fill="none" stroke="#c4302b" stroke-width="1"/></svg>
<svg class="abs" style="left:48.5px;top:13.5px" width="10" height="8" viewBox="0 0 10 8"><path d="M0.5 0.8h9" stroke="#23233a" stroke-width="1.2"/><path d="M1 3h8L5 7.5Z" fill="#23233a"/></svg>
<svg class="abs" style="left:13px;top:70px" width="34" height="35" viewBox="0 0 35 35" preserveAspectRatio="none">
<defs><linearGradient id="sv" x1="0" y1="0" x2="0" y2="1"><stop offset="0" stop-color="#54668c"/><stop offset="1" stop-color="#34435f"/></linearGradient>
<linearGradient id="svl" x1="0" y1="0" x2="0" y2="1"><stop offset="0" stop-color="#ffffff"/><stop offset="0.7" stop-color="#e9eff8"/><stop offset="0.72" stop-color="#6fb0e6"/><stop offset="1" stop-color="#4b96d8"/></linearGradient></defs>
<path d="M2.5 2.5h30a1 1 0 0 1 1 1v28a1 1 0 0 1 -1 1h-29l-2-2v-27a1 1 0 0 1 1-1z" fill="url(#sv)" stroke="#2c3850" stroke-width="1"/>
<rect x="9" y="2.5" width="18" height="10.5" fill="#dfe5ee" stroke="#b9c2d2" stroke-width="0.6"/>
<rect x="20.5" y="4" width="4.2" height="7.5" fill="#3a4965"/>
<rect x="8" y="19" width="19.5" height="13.5" fill="url(#svl)" stroke="#c8d2e2" stroke-width="0.5"/>
<path d="M10.5 22.5h14.5M10.5 25h14.5" stroke="#a9b7cf" stroke-width="1.1"/>
</svg>
<svg class="abs" style="left:67px;top:69px" width="38" height="38" viewBox="0 0 38 38">
<defs><radialGradient id="bk" cx="0.5" cy="0.25" r="0.85"><stop offset="0" stop-color="#b7e34a"/><stop offset="0.55" stop-color="#86c122"/><stop offset="1" stop-color="#5f9a12"/></radialGradient></defs>
<circle cx="19" cy="19" r="17.2" fill="url(#bk)" stroke="#6ea01c" stroke-width="1"/>
<path d="M7.5 18.5L19 9.5V14.5H27.5V22.5H19V27.5Z" fill="#f4f7fb" stroke="#5f8f1a" stroke-width="1"/>
</svg>
<svg class="abs" style="left:150px;top:68px" width="38" height="38" viewBox="0 0 38 38">
<defs><linearGradient id="tb" x1="0" y1="0" x2="0" y2="1"><stop offset="0" stop-color="#7fb2e8"/><stop offset="1" stop-color="#4f8fd8"/></linearGradient>
<linearGradient id="wr" x1="0" y1="0" x2="1" y2="1"><stop offset="0" stop-color="#c9d0dc"/><stop offset="1" stop-color="#7f8aa0"/></linearGradient></defs>
<rect x="1.5" y="1.5" width="30" height="29" rx="1.5" fill="#f3f6fb" stroke="#7a9fd4" stroke-width="1.2"/>
<rect x="2" y="2" width="29" height="7" fill="url(#tb)"/>
<path d="M11.5 2v28M21.5 2v28M2 9.5h29M2 16.5h29M2 23.5h29" stroke="#a9c3e6" stroke-width="1"/>
<g transform="translate(0.5 1) rotate(-45 22 22)"><path d="M19.2 23v14a2.8 2.8 0 0 0 5.6 0V23a7 7 0 0 0 3.6-9.2l-3.2 3.4h-3.8l-0.6-3.6 3-3.3a7 7 0 0 0-4.6 12.7z" fill="url(#wr)" stroke="#6b7588" stroke-width="0.9"/></g>
</svg>
<svg class="abs" style="left:240px;top:69px" width="36" height="36" viewBox="0 0 36 36"><defs><linearGradient id="wsg" x1="0" y1="0" x2="0" y2="1"><stop offset="0" stop-color="#8fc3ee"/><stop offset="1" stop-color="#5a9fdc"/></linearGradient></defs><rect x="0.5" y="0.5" width="16" height="9.8" fill="url(#wsg)" stroke="#4f8fd4" stroke-width="1"/><rect x="19.5" y="0.5" width="16" height="9.8" fill="url(#wsg)" stroke="#4f8fd4" stroke-width="1"/><rect x="0.5" y="13.1" width="16" height="9.8" fill="url(#wsg)" stroke="#4f8fd4" stroke-width="1"/><rect x="19.5" y="13.1" width="16" height="9.8" fill="url(#wsg)" stroke="#4f8fd4" stroke-width="1"/><rect x="0.5" y="25.7" width="16" height="9.8" fill="url(#wsg)" stroke="#4f8fd4" stroke-width="1"/><rect x="19.5" y="25.7" width="16" height="9.8" fill="url(#wsg)" stroke="#4f8fd4" stroke-width="1"/></svg>
<svg class="abs" style="left:254px;top:133px" width="8" height="5" viewBox="0 0 8 5"><path d="M0 0.5h8L4 5Z" fill="#23233a"/></svg>
<svg class="abs" style="left:108px;top:163px" width="7" height="7" viewBox="0 0 7 7"><path d="M7 0V7H0Z" fill="#a9aab6"/></svg>
<svg class="abs" style="left:296px;top:163px" width="7" height="7" viewBox="0 0 7 7"><path d="M7 0V7H0Z" fill="#a9aab6"/></svg>
<div class="abs" style="left:6px;top:151px;width:106px;height:1px;background:linear-gradient(90deg,rgba(214,215,222,0),#d6d7de 20%,#d6d7de 80%,rgba(214,215,222,0))"></div>
<div class="abs" style="left:126px;top:151px;width:174px;height:1px;background:linear-gradient(90deg,rgba(214,215,222,0),#d6d7de 20%,#d6d7de 80%,rgba(214,215,222,0))"></div>
<div class="abs" style="left:1805px;top:8px;width:36px;height:18px;border:1px solid #aeb0bc;border-radius:3px;background:linear-gradient(#ebebee,#d3d4da)"></div>
<div class="abs" style="left:1844px;top:8px;width:36px;height:18px;border:1px solid #aeb0bc;border-radius:3px;background:linear-gradient(#ebebee,#d3d4da)"></div>
<div class="abs" style="left:1883px;top:8px;width:36px;height:18px;border:1px solid #aeb0bc;border-radius:3px;background:linear-gradient(#ebebee,#d3d4da)"></div>
<svg class="abs" style="left:1817px;top:18px" width="12" height="3" viewBox="0 0 12 3"><path d="M0.5 1.5h11" stroke="#7d7f94" stroke-width="2.2"/></svg>
<svg class="abs" style="left:1855px;top:11px" width="14" height="11" viewBox="0 0 14 11"><path d="M5 3.5V1.5h8v4.5H10.5" fill="none" stroke="#7d7f94" stroke-width="2"/><rect x="1.5" y="5" width="8" height="4.8" fill="none" stroke="#7d7f94" stroke-width="2"/></svg>
<svg class="abs" style="left:1895px;top:12.5px" width="12" height="9" viewBox="0 0 12 9"><path d="M1.6 0.6L10.4 8.4M10.4 0.6L1.6 8.4" stroke="#7d7f94" stroke-width="2.7" fill="none"/></svg>
<svg class="abs" style="left:1826px;top:48px" width="12" height="3" viewBox="0 0 12 3"><path d="M0.5 1.5h11" stroke="#7d7f94" stroke-width="2.2"/></svg>
<svg class="abs" style="left:1860px;top:41px" width="14" height="11" viewBox="0 0 14 11"><path d="M5 3.5V1.5h8v4.5H10.5" fill="none" stroke="#7d7f94" stroke-width="2"/><rect x="1.5" y="5" width="8" height="4.8" fill="none" stroke="#7d7f94" stroke-width="2"/></svg>
<svg class="abs" style="left:1896px;top:42.5px" width="12" height="9" viewBox="0 0 12 9"><path d="M1.6 0.6L10.4 8.4M10.4 0.6L1.6 8.4" stroke="#7d7f94" stroke-width="2.7" fill="none"/></svg>
<svg class="abs" style="left:1894px;top:155px" width="18" height="12" viewBox="0 0 18 12"><path d="M1.5 9.5L9 2.5L16.5 9.5" fill="none" stroke="#55566a" stroke-width="3"/><path d="M1.5 9.5L9 2.5L16.5 9.5" fill="none" stroke="#f3f3f6" stroke-width="1"/></svg>
<div id="status" class="abs"></div>
<div class="abs st" style="left:9px;letter-spacing:-0.2px">Open Windows</div>
<div class="abs st" style="left:1484px;letter-spacing:-0.2px">User : Bianca</div>
<div class="abs st" style="left:1585px;letter-spacing:0.12px">28/02/2023</div>
<div class="abs st" style="left:1675px;letter-spacing:0.18px">Version : 2.5.1.4</div>
<div class="abs st" style="left:1798px;letter-spacing:-0.32px">Example Company</div>
<div class="abs ssep" style="left:1471px"></div>
<div class="abs ssep" style="left:1574px"></div>
<div class="abs ssep" style="left:1665px"></div>
<div class="abs ssep" style="left:1786px"></div>
<svg class="abs" style="left:104px;top:1011px" width="8" height="5" viewBox="0 0 8 5"><path d="M0 0.5h8L4 5Z" fill="#23233a"/></svg>
<div class="abs" style="left:0;top:0;width:1px;height:1030px;background:rgba(60,62,80,.22)"></div>
<div class="abs" style="left:1919px;top:0;width:1px;height:1030px;background:rgba(60,62,80,.18)"></div>
</body>
</html>
